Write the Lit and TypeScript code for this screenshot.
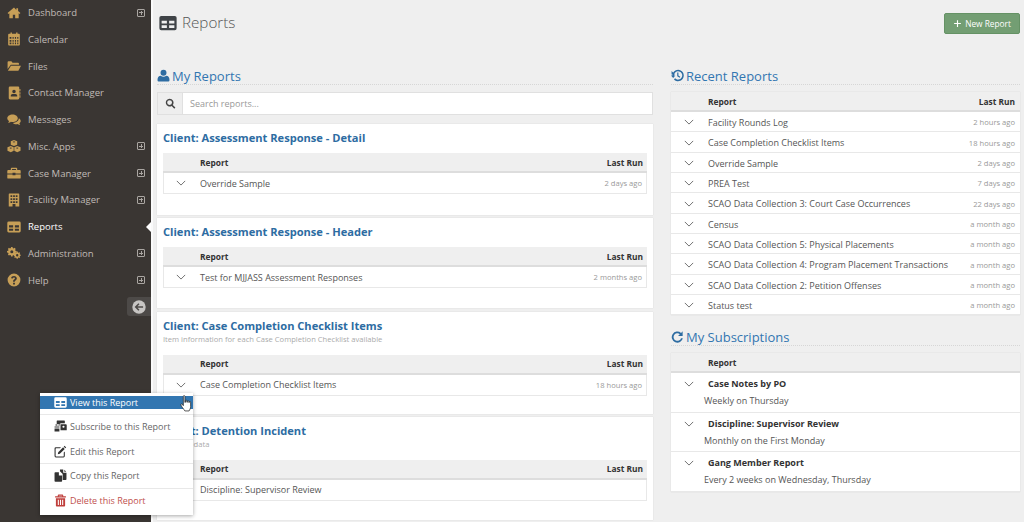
import {LitElement, html, css, svg} from 'lit';
import {customElement} from 'lit/decorators.js';

const ICONS: Record<string, unknown> = {
  home: svg`<path d="M12 2.5 1 12.2l1.4 1.5L4 12.4V21h6v-6h4v6h6v-8.6l1.6 1.3 1.400-1.500-4-3.500V4h-3v3z"/>`,
  calendar: svg`<path fill-rule="evenodd" d="M6 1h2.400v2h7.200V1H18v2h2.500A1.500 1.500 0 0 1 22 4.500V21.500A1.500 1.500 0 0 1 20.500 23h-17A1.500 1.500 0 0 1 2 21.500V4.500A1.500 1.500 0 0 1 3.500 3H6zM4.500 8.500v3h3v-3zm5 0v3h2v-3zm4 0v3h2v-3zm4 0v3h2v-3zm-13 5v3h3v-3zm5 0v3h2v-3zm4 0v3h2v-3zm4 0v3h2v-3zm-13 4.500v3h3v-3zm5 0v3h2v-3zm4 0v3h2v-3zm4 0v3h2v-3z"/>`,
  folder: svg`<path d="M1 5.500A1.500 1.500 0 0 1 2.500 4h5l2 2.500H19A1.500 1.500 0 0 1 20.500 8v2H6.500L1 17zM6.800 11.500H24L19.500 20H1.500z"/>`,
  contact: svg`<path fill-rule="evenodd" d="M5 1h14a2 2 0 0 1 2 2v18a2 2 0 0 1-2 2H5a2 2 0 0 1-2-2V3a2 2 0 0 1 2-2zm7 5.500a3 3 0 1 0 0 6 3 3 0 0 0 0-6zM6.500 18h11v-1.500c0-1.800-1.500-3-3-3h-5c-1.500 0-3 1.200-3 3zM21.500 5H23v4h-1.500zm0 5.500H23v4h-1.500zm0 5.500H23v4h-1.500z"/>`,
  comments: svg`<path d="M9.500 2.500c5 0 9 2.800 9 6.500s-4 6.500-9 6.500c-1 0-2-.100-2.800-.300C5.500 16.200 3.800 17 1.800 17c.900-1 1.500-2.100 1.700-3.200C1.600 12.600.500 10.900.500 9c0-3.700 4-6.500 9-6.500z"/><path d="M20.300 9.200c2 1 3.200 2.700 3.200 4.600 0 1.600-.900 3-2.300 4 .200 1 .800 2 1.500 2.700-1.700 0-3.200-.700-4.200-1.600-.800.200-1.600.300-2.500.300-2.500 0-4.700-.800-6-2.200 5.500 0 10-3 10.300-7.800z"/>`,
  cubes: svg`<path fill-rule="evenodd" d="M12 1.500l5.500 2.200v6L12 12 6.500 9.700v-6zM6.500 12l5 2.200v6l-5 2.300L.800 20.200v-6zm11 0l5.700 2.200v6l-5.700 2.300-5-2.300v-6zM12 4l-2.500 1 2.500 1 2.500-1zM6.500 14.500l-2.400 1 2.400 1 2.300-1zm11 0l-2.300 1 2.300 1 2.400-1z"/>`,
  briefcase: svg`<path fill-rule="evenodd" d="M8 3h8a1.500 1.500 0 0 1 1.500 1.500V7H22a1.500 1.500 0 0 1 1.500 1.500V13h-9v-1.500h-5V13h-9V8.500A1.500 1.500 0 0 1 2 7h4.500V4.500A1.500 1.500 0 0 1 8 3zm.500 2v2h7V5zM.500 14.500h9V16h5v-1.500h9V20a1.500 1.500 0 0 1-1.500 1.500H2A1.500 1.500 0 0 1 .500 20z"/>`,
  building: svg`<path fill-rule="evenodd" d="M4 1h16a1 1 0 0 1 1 1v21h-6.500v-4h-5v4H3V2a1 1 0 0 1 1-1zm2 3v3h3V4zm4.500 0v3h3V4zM15 4v3h3V4zM6 9v3h3V9zm4.500 0v3h3V9zM15 9v3h3V9zM6 14v3h3v-3zm4.500 0v3h3v-3zm4.500 0v3h3v-3z"/>`,
  table: svg`<path fill-rule="evenodd" d="M3 2.500h18A2.500 2.500 0 0 1 23.500 5v14a2.500 2.500 0 0 1-2.500 2.500H3A2.500 2.500 0 0 1 .500 19V5A2.500 2.500 0 0 1 3 2.500zM3.500 9v3.800h7V9zm10 0v3.800h7V9zm-10 6v3.500h7V15zm10 0v3.500h7V15z"/>`,
  cogs: svg`<path fill-rule="evenodd" d="M7 1.500h2.500l.400 2 1.500.700 1.800-1 1.700 1.800-1 1.700.600 1.500 2 .500V11l-2 .400-.600 1.500 1 1.800-1.700 1.700-1.800-1-1.500.600-.400 2H7l-.400-2-1.500-.600-1.800 1-1.700-1.700 1-1.800-.600-1.500-2-.400V8.700l2-.500.600-1.500-1-1.700L3.300 3.200l1.800 1 1.500-.700zM8.250 7.200a2.600 2.600 0 1 0 0 5.200 2.600 2.600 0 0 0 0-5.200z"/><path fill-rule="evenodd" d="M17.500 12.500h2l.300 1.500 1.200.500 1.300-.800 1.200 1.300-.800 1.300.500 1.200 1.300.300v1.900l-1.300.300-.500 1.200.800 1.300-1.200 1.200-1.300-.800-1.200.500-.300 1.300h-2l-.300-1.300-1.200-.500-1.300.800-1.200-1.200.800-1.300-.500-1.200-1.300-.300v-1.900l1.300-.300.500-1.200-.800-1.300 1.200-1.300 1.300.800 1.200-.500zm1 4.300a2 2 0 1 0 0 4 2 2 0 0 0 0-4z" transform="translate(-1 -3)"/>`,
  help: svg`<path fill-rule="evenodd" d="M12 1a11 11 0 1 1 0 22 11 11 0 0 1 0-22zm-1.600 15.500v3h3.200v-3zM12 5c-2.800 0-4.600 1.500-5 3.900l2.900.600c.200-1.200.900-1.800 2-1.800 1 0 1.800.600 1.800 1.500 0 .800-.500 1.200-1.400 1.800-1.200.800-1.900 1.500-1.900 3.100v.800h3v-.500c0-.800.400-1.100 1.300-1.700 1.300-.900 2.100-1.900 2.100-3.600C16.800 6.500 14.700 5 12 5z"/>`,
  user: svg`<circle cx="12" cy="7" r="5.500"/><path d="M7 12.500c1.300 1.100 3 1.700 5 1.700s3.700-.600 5-1.700c3.500.200 6 3 6 7V21a2 2 0 0 1-2 2H3a2 2 0 0 1-2-2v-1.500c0-4 2.500-6.800 6-7z"/>`,
  search: svg`<path d="M10 1.500a8.500 8.500 0 0 1 6.900 13.500l5.800 5.800-2.400 2.400-5.800-5.800A8.500 8.500 0 1 1 10 1.500zm0 3.200a5.300 5.300 0 1 0 0 10.600 5.300 5.300 0 0 0 0-10.600z"/>`,
  history: svg`<path d="M13 1.500a10.500 10.500 0 1 1-7.500 17.800l2-2A7.700 7.700 0 1 0 5.300 12H8l-4 4.500L0 12h2.500A10.500 10.500 0 0 1 13 1.500z"/><path d="M11.500 6.500h2.200v5.600l3.500 2.100-1.100 1.800-4.600-2.800z"/><path d="M1 3.500l6.500 6.500H1z"/>`,
  refresh: svg`<path d="M21.500 2.500v8.500H13l3.300-3.300A7 7 0 1 0 18.500 15h3.300A10.300 10.300 0 1 1 18.600 5.400z"/>`,
  envelope: svg`<path fill-rule="evenodd" d="M6 1h13a1 1 0 0 1 1 1v4h-7a3 3 0 0 0-3 3v4H7v-2H5V2a1 1 0 0 1 1-1zM1 12h9v2H1zm0 3.500h9V21H1zM12 8h10a1.500 1.500 0 0 1 1.500 1.500V19H12zm5.500 2.500a2 2 0 1 0 0 4 2 2 0 0 0 0-4zM9 8H3v2.500h6z"/>`,
  edit: svg`<path fill-rule="evenodd" d="M3.500 4H13l-2 2H3.800a.8.8 0 0 0-.8.8v13.400c0 .4.4.8.8.8h13.400a.8.8 0 0 0 .8-.8V14l2-2v8.500a2.500 2.500 0 0 1-2.500 2.500H3.500A2.500 2.500 0 0 1 1 20.500v-14A2.500 2.500 0 0 1 3.500 4z"/><path d="M19.500 1.500l3 3-1.500 1.500-3-3zM16.800 4.200l3 3-9 9-3.800.8.800-3.800z"/>`,
  copy: svg`<path d="M11 1h6v6h6v12a1.500 1.500 0 0 1-1.500 1.500H16V9l-5-5z"/><path d="M19 1.500 22.500 5H19z"/><path d="M2.500 6H9v6h6v10a1.500 1.500 0 0 1-1.500 1.500h-11A1.500 1.500 0 0 1 1 22V7.500A1.500 1.500 0 0 1 2.500 6z"/>`,
  trash: svg`<path fill-rule="evenodd" d="M8.500 1h7A1.500 1.500 0 0 1 17 2.500V4h5v2.500H2V4h5V2.500A1.500 1.500 0 0 1 8.500 1zM9 3v1h6V3zM3.500 8h17v13.500A1.500 1.500 0 0 1 19 23H5a1.500 1.500 0 0 1-1.500-1.500zm3.500 2.500v10h2v-10zm4 0v10h2v-10zm4 0v10h2v-10z"/>`,
  plus: svg`<path d="M10.500 3h3v7.500H21v3h-7.500V21h-3v-7.500H3v-3h7.500z"/>`,
};

function icon(name: string) {
  return html`<svg class="ic" viewBox="0 0 24 24" fill="currentColor">${ICONS[name]}</svg>`;
}

const chevron = html`<svg class="chev" viewBox="0 0 12 7" fill="none" stroke="currentColor" stroke-width="1"><path d="M1 1l5 5 5-5"/></svg>`;

const NAV = [
  {label: 'Dashboard', icon: 'home', more: true},
  {label: 'Calendar', icon: 'calendar'},
  {label: 'Files', icon: 'folder'},
  {label: 'Contact Manager', icon: 'contact'},
  {label: 'Messages', icon: 'comments'},
  {label: 'Misc. Apps', icon: 'cubes', more: true},
  {label: 'Case Manager', icon: 'briefcase', more: true},
  {label: 'Facility Manager', icon: 'building', more: true},
  {label: 'Reports', icon: 'table', active: true},
  {label: 'Administration', icon: 'cogs', more: true},
  {label: 'Help', icon: 'help', more: true},
];

const GROUPS = [
  {title: 'Client: Assessment Response - Detail', sub: '', name: 'Override Sample', run: '2 days ago', h: 91},
  {title: 'Client: Assessment Response - Header', sub: '', name: 'Test for MJJASS Assessment Responses', run: '2 months ago', h: 90},
  {title: 'Client: Case Completion Checklist Items', sub: 'Item information for each Case Completion Checklist available', name: 'Case Completion Checklist Items', run: '18 hours ago', h: 102},
  {title: 'Client: Detention Incident', sub: 'Incident data', name: 'Discipline: Supervisor Review', run: '', h: 103},
];

const RECENT = [
  ['Facility Rounds Log', '2 hours ago'],
  ['Case Completion Checklist Items', '18 hours ago'],
  ['Override Sample', '2 days ago'],
  ['PREA Test', '7 days ago'],
  ['SCAO Data Collection 3: Court Case Occurrences', '22 days ago'],
  ['Census', 'a month ago'],
  ['SCAO Data Collection 5: Physical Placements', 'a month ago'],
  ['SCAO Data Collection 4: Program Placement Transactions', 'a month ago'],
  ['SCAO Data Collection 2: Petition Offenses', 'a month ago'],
  ['Status test', 'a month ago'],
];

const SUBS = [
  ['Case Notes by PO', 'Weekly on Thursday'],
  ['Discipline: Supervisor Review', 'Monthly on the First Monday'],
  ['Gang Member Report', 'Every 2 weeks on Wednesday, Thursday'],
];

const MENU = [
  {label: 'Subscribe to this Report', icon: 'envelope'},
  {label: 'Edit this Report', icon: 'edit'},
  {label: 'Copy this Report', icon: 'copy'},
  {label: 'Delete this Report', icon: 'trash', danger: true},
];

@customElement('app-root')
export class AppRoot extends LitElement {
  static override styles = css`
    :host {
      display: block;
      height: 522px;
      overflow: hidden;
      position: relative;
      font-family: 'Open Sans', sans-serif;
      font-size: 9px;
      color: #333;
      background: #efefef;
    }

    .page {
      display: flex;
      height: 522px;
    }

    .ic {
      display: block;
      flex: none;
    }

    .side {
      width: 151px;
      flex: none;
      background: #3a3633;
      display: flex;
      flex-direction: column;
    }

    .nav {
      height: 26.75px;
      display: flex;
      align-items: center;
      position: relative;
      color: #c0bbb7;
      font-size: 9.5px;
      box-sizing: border-box;
      padding: 0 6px 1.5px 7px;
    }

    .nav .ic {
      width: 14px;
      height: 14px;
      color: #c79f57;
      margin-right: 7px;
    }

    .nav.active {
      color: #fff;
    }

    .nav.active::after {
      content: '';
      position: absolute;
      right: 0;
      top: 8px;
      border: 5px solid transparent;
      border-right-color: #fff;
      border-left-width: 0;
    }

    .nav .label {
      flex: 1;
    }

    .more {
      width: 6px;
      height: 6px;
      border: 1px solid #aaa6a2;
      border-radius: 1px;
      position: relative;
    }

    .more::before,
    .more::after {
      content: '';
      position: absolute;
      background: #aaa6a2;
    }

    .more::before {
      left: 1px;
      right: 1px;
      top: 2.5px;
      height: 1px;
    }

    .more::after {
      top: 1px;
      bottom: 1px;
      left: 2.5px;
      width: 1px;
    }

    .collapse {
      align-self: flex-end;
      width: 24px;
      height: 19px;
      margin-top: 3px;
      background: #4d4a48;
      border-radius: 3px 0 0 3px;
      display: flex;
      align-items: center;
      justify-content: center;
    }

    .collapse svg {
      width: 14px;
      height: 14px;
    }

    .main {
      flex: 1;
      min-width: 0;
      border-left: 2px solid #fafafa;
      box-sizing: border-box;
      padding: 0 4px;
    }

    .top {
      height: 60px;
      display: flex;
      justify-content: space-between;
      align-items: flex-start;
    }

    .page-title {
      display: flex;
      align-items: center;
      gap: 5px;
      margin: 12px 0 0 2px;
      font-size: 15.2px;
      font-weight: 300;
      line-height: 20px;
      color: #555;
    }

    .page-title .ic {
      width: 18px;
      height: 18px;
      margin-top: 1px;
      color: #3f4347;
    }

    .btn {
      margin-top: 13px;
      height: 21px;
      width: 76px;
      box-sizing: border-box;
      background: #739e73;
      border: 1px solid #659265;
      border-radius: 2px;
      color: #fff;
      font-size: 8.3px;
      display: flex;
      align-items: center;
      justify-content: center;
      gap: 3px;
    }

    .btn .ic {
      width: 9px;
      height: 9px;
    }

    .cols {
      display: flex;
      gap: 18px;
      align-items: flex-start;
    }

    .left {
      width: 496px;
      flex: none;
    }

    .right {
      width: 349px;
      flex: none;
    }

    .heading {
      display: flex;
      align-items: center;
      gap: 2px;
      height: 25px;
      box-sizing: border-box;
      padding-top: 7px;
      margin: 0 0 7px;
      font-size: 13px;
      font-weight: 400;
      color: #3276b1;
      border-bottom: 1px dotted #d6d6d6;
    }

    .heading .ic {
      width: 13px;
      height: 13px;
      color: #2d6ca2;
    }

    .search {
      display: flex;
      height: 23px;
      border: 1px solid #e0e0e0;
      box-sizing: border-box;
      margin-bottom: 9px;
      background: #fff;
    }

    .search-ic {
      width: 24px;
      background: #eee;
      border-right: 1px solid #e0e0e0;
      display: flex;
      align-items: center;
      justify-content: center;
      color: #444;
    }

    .search-ic .ic {
      width: 11px;
      height: 11px;
    }

    .search-text {
      padding: 0 7px;
      line-height: 21px;
      color: #999;
    }

    .card {
      background: #fff;
      box-shadow: 0 0 1px rgba(0, 0, 0, 0.15);
      margin-bottom: 3.3px;
      box-sizing: border-box;
      padding: 5px 6px;
    }

    .card-title {
      font-size: 11.1px;
      font-weight: 700;
      line-height: 18px;
      color: #2d6ca2;
    }

    .card-sub {
      font-size: 7.6px;
      line-height: 9px;
      color: #aaa;
    }

    .head {
      display: grid;
      grid-template-columns: 37px 1fr auto;
      align-items: center;
      height: 20px;
      box-sizing: border-box;
      background: #efefef;
      border-bottom: 2px solid #ddd;
      font-size: 8.4px;
      font-weight: 700;
      padding-right: 5px;
      color: #333;
    }

    .card .head {
      margin-top: 6px;
      padding-right: 4px;
    }

    .card .head.sub-gap {
      margin-top: 11px;
    }

    .row {
      display: grid;
      grid-template-columns: 37px 1fr auto;
      align-items: center;
      height: 20.33px;
      box-sizing: border-box;
      border-bottom: 1px solid #e8e8e8;
      color: #555;
      padding: 1.5px 5px 0 0;
    }

    .card .row {
      grid-template-columns: 36px 1fr auto;
      height: 21px;
      padding: 0 4px 0 0;
      border: 1px solid #e8e8e8;
      border-top: 0;
    }

    .time {
      font-size: 7.6px;
      color: #999;
    }

    .chev {
      width: 10px;
      height: 6px;
      margin-left: 13px;
      color: #555;
    }

    .card .chev {
      margin-left: 12px;
    }

    .table {
      background: #fff;
      box-shadow: 0 0 1px rgba(0, 0, 0, 0.15);
      margin-bottom: 6px;
    }

    .sub {
      height: 39.6px;
      box-sizing: border-box;
      border-bottom: 1px solid #e8e8e8;
      padding-top: 4px;
      color: #555;
    }

    .sub-name {
      display: grid;
      grid-template-columns: 37px 1fr;
      align-items: center;
      font-weight: 700;
      color: #333;
      line-height: 14px;
    }

    .sub-when {
      margin: 2px 0 0 33px;
      line-height: 16px;
    }

    .menu {
      position: absolute;
      left: 40px;
      top: 393px;
      width: 153px;
      height: 122px;
      box-sizing: border-box;
      padding-top: 3px;
      background: #fff;
      box-shadow: 0 1px 4px rgba(0, 0, 0, 0.35);
      color: #666;
    }

    .menu-item {
      display: flex;
      align-items: center;
      gap: 3px;
      height: 24.5px;
      box-sizing: border-box;
      padding-left: 14px;
      border-bottom: 1px solid #e8e8e8;
    }

    .menu-item:last-child {
      border-bottom: 0;
    }

    .menu-item .ic {
      width: 13px;
      height: 13px;
      color: #333;
    }

    .menu-item.hover {
      height: 13px;
      margin-bottom: 5px;
      background: #3276b1;
      color: #fff;
      border: 0;
      position: relative;
    }

    .menu-item.hover .ic {
      color: #fff;
    }

    .menu-divider {
      height: 1px;
      background: #e8e8e8;
    }

    .menu-item.danger {
      color: #c0504d;
    }

    .menu-item.danger .ic {
      color: #c0403d;
    }

    .cursor {
      position: absolute;
      left: 140px;
      top: -1px;
      width: 13px;
      height: 17px;
    }
  `;

  private renderGroup(g: (typeof GROUPS)[number]) {
    return html`
      <div class="card" style="height: ${g.h}px">
        <div class="card-title">${g.title}</div>
        ${g.sub ? html`<div class="card-sub">${g.sub}</div>` : ''}
        <div class="head ${g.sub ? 'sub-gap' : ''}"><span></span><span>Report</span><span>Last Run</span></div>
        <div class="row">
          ${chevron}
          <span>${g.name}</span>
          <span class="time">${g.run}</span>
        </div>
      </div>
    `;
  }

  override render() {
    return html`
      <div class="page">
        <nav class="side">
          ${NAV.map(
            (n) => html`
              <div class="nav ${n.active ? 'active' : ''}">
                ${icon(n.icon)}
                <span class="label">${n.label}</span>
                ${n.more ? html`<span class="more"></span>` : ''}
              </div>
            `,
          )}
          <div class="collapse">
            <svg viewBox="0 0 24 24">
              <circle cx="12" cy="12" r="11.5" fill="#c7c5c3" />
              <path d="M11 5.500 4.500 12l6.500 6.500 1.800-1.800-3.400-3.400H19v-2.600H9.400l3.400-3.400z" fill="#4d4a48" />
            </svg>
          </div>
        </nav>
        <main class="main">
          <div class="top">
            <h1 class="page-title">${icon('table')}Reports</h1>
            <div class="btn">${icon('plus')}New Report</div>
          </div>
          <div class="cols">
            <section class="left">
              <h2 class="heading">${icon('user')}My Reports</h2>
              <div class="search">
                <div class="search-ic">${icon('search')}</div>
                <div class="search-text">Search reports...</div>
              </div>
              ${GROUPS.map((g) => this.renderGroup(g))}
            </section>
            <section class="right">
              <h2 class="heading">${icon('history')}Recent Reports</h2>
              <div class="table">
                <div class="head"><span></span><span>Report</span><span>Last Run</span></div>
                ${RECENT.map(
                  ([name, run]) => html`
                    <div class="row">
                      ${chevron}
                      <span>${name}</span>
                      <span class="time">${run}</span>
                    </div>
                  `,
                )}
              </div>
              <h2 class="heading">${icon('refresh')}My Subscriptions</h2>
              <div class="table">
                <div class="head"><span></span><span>Report</span></div>
                ${SUBS.map(
                  ([name, when]) => html`
                    <div class="sub">
                      <div class="sub-name">${chevron}<span>${name}</span></div>
                      <div class="sub-when">${when}</div>
                    </div>
                  `,
                )}
              </div>
            </section>
          </div>
        </main>
      </div>
      <div class="menu">
        <div class="menu-item hover">
          ${icon('table')}View this Report
          <svg class="cursor" viewBox="0 0 12 16">
            <path
              d="M3 1.200c0-.900 1.500-.900 1.500 0V7l.500-.200V5.500c0-.800 1.400-.800 1.400 0v1.300h.400V6c0-.800 1.400-.800 1.400 0v1h.400v-.300c0-.800 1.300-.800 1.300 0V11c0 1.500-.900 3-1.500 4H4.500C3.500 13.500 1 10.500.800 9.500c-.300-1 .700-1.500 1.300-.800L3 10z"
              fill="#fff"
              stroke="#222"
              stroke-width=".7"
            />
          </svg>
        </div>
        <div class="menu-divider"></div>
        ${MENU.map(
          (m) => html`
            <div class="menu-item ${m.danger ? 'danger' : ''}">${icon(m.icon)}${m.label}</div>
          `,
        )}
      </div>
    `;
  }
}

declare global {
  interface HTMLElementTagNameMap {
    'app-root': AppRoot;
  }
}
